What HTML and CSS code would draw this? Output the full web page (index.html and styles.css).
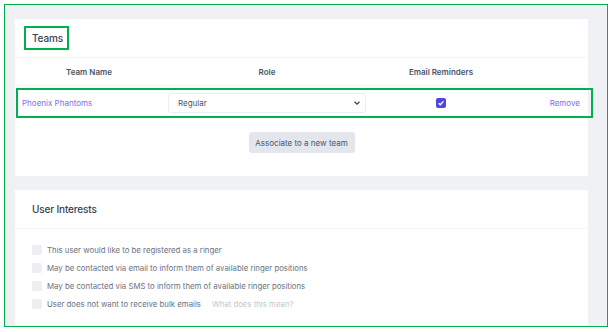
FILE: index.html
```html
<!DOCTYPE html>
<html lang="en">
  <head>
    <meta charset="UTF-8" />
    <meta name="viewport" content="width=device-width, initial-scale=1.0" />
    <title>Teams</title>
    <link rel="stylesheet" href="styles.css">
  </head>
  <body>
    <div class="frame">
      <section class="card">
        <div class="card-head">
          <h2 class="title marked-title">Teams</h2>
        </div>
        <div class="teams">
          <div class="row head">
            <div>Team Name</div>
            <div>Role</div>
            <div>Email Reminders</div>
            <div></div>
          </div>
          <div class="row item marked">
            <div><a href="#" class="link">Phoenix Phantoms</a></div>
            <div>
              <div class="select">
                <span>Regular</span>
                <svg width="8" height="8" viewBox="0 0 8 8"><path d="M1.5 2.8 L4 5.2 L6.5 2.8" fill="none" stroke="#374151" stroke-width="1.3"/></svg>
              </div>
            </div>
            <div class="center">
              <span class="check on">
                <svg width="10" height="10" viewBox="0 0 10 10"><path d="M2.6 5.2 L4.3 6.8 L7.4 3.4" fill="none" stroke="#fff" stroke-width="1.4"/></svg>
              </span>
            </div>
            <div class="end"><a href="#" class="link remove">Remove</a></div>
          </div>
        </div>
        <div class="actions">
          <button>Associate to a new team</button>
        </div>
      </section>

      <section class="card">
        <div class="card-head">
          <h2 class="title">User Interests</h2>
        </div>
        <ul class="interests">
          <li><span class="check"></span>This user would like to be registered as a ringer</li>
          <li><span class="check"></span>May be contacted via email to inform them of available ringer positions</li>
          <li><span class="check"></span>May be contacted via SMS to inform them of available ringer positions</li>
          <li><span class="check"></span>User does not want to receive bulk emails <a href="#" class="hint">What does this mean?</a></li>
        </ul>
      </section>
    </div>
  </body>
</html>
```

FILE: styles.css
```css
* {
  margin: 0;
  padding: 0;
  box-sizing: border-box;
}
body {
  font-family: Inter, "Noto Sans", sans-serif;
  background: #fff;
  overflow: hidden;
}
.frame {
  margin: 4px;
  height: 323px;
  width: 604px;
  border: 1px solid #00b050;
  background: #eff1f5;
  padding: 14px 19px 0 10px;
  display: flex;
  flex-direction: column;
  gap: 14px;
  overflow: hidden;
}
.card {
  background: #fff;
}
.card-head {
  height: 39px;
  padding: 0 17px;
  display: flex;
  align-items: center;
  border-bottom: 1px solid #f3f4f6;
}
.title {
  font-size: 10px;
  font-weight: 500;
  letter-spacing: -0.15px;
  color: #374151;
}
.marked-title {
  margin-left: -8px;
  padding: 4px 4px 4px 6px;
  border: 2px solid #00b050;
}
.row {
  display: grid;
  grid-template-columns: 147px 210px 138px 1fr;
  align-items: center;
}
.row > div {
  padding: 0 6px;
}
.row > div:first-child {
  padding-left: 7px;
}
.head {
  height: 28px;
  border-bottom: 1px solid #f3f4f6;
  font-size: 8px;
  font-weight: 600;
  color: #4b5563;
  text-align: center;
}
.item {
  height: 30px;
  margin-top: 2px;
  font-size: 8px;
  position: relative;
}
.marked::after {
  content: "";
  position: absolute;
  left: 1px;
  right: -5px;
  top: 0;
  bottom: 0;
  border: 2px solid #00b050;
}
.link {
  color: #7c6ff0;
  text-decoration: none;
}
.select {
  height: 20px;
  border: 1px solid #eceef2;
  border-radius: 3px;
  display: flex;
  align-items: center;
  justify-content: space-between;
  padding: 0 4px 0 9px;
  color: #4b5563;
}
.center {
  display: flex;
  justify-content: center;
}
.end {
  text-align: right;
  padding-right: 8px !important;
}
.check {
  width: 10px;
  height: 10px;
  border-radius: 2px;
  background: #eceef3;
  display: inline-flex;
  flex-shrink: 0;
}
.check.on {
  background: #4f46e5;
}
.actions {
  display: flex;
  justify-content: center;
  padding: 14px 0 23px;
}
button {
  font-family: inherit;
  font-size: 8px;
  color: #4b5563;
  background: #e4e6ee;
  border: none;
  border-radius: 3px;
  height: 21px;
  width: 106px;
}
.interests {
  list-style: none;
  padding: 16px 17px;
  display: flex;
  flex-direction: column;
  gap: 8px;
}
.interests li {
  display: flex;
  align-items: center;
  gap: 5px;
  font-size: 7.8px;
  color: #6b7280;
  height: 10px;
}
.hint {
  color: #c3c7cf;
  text-decoration: none;
  margin-left: 6px;
}
```
